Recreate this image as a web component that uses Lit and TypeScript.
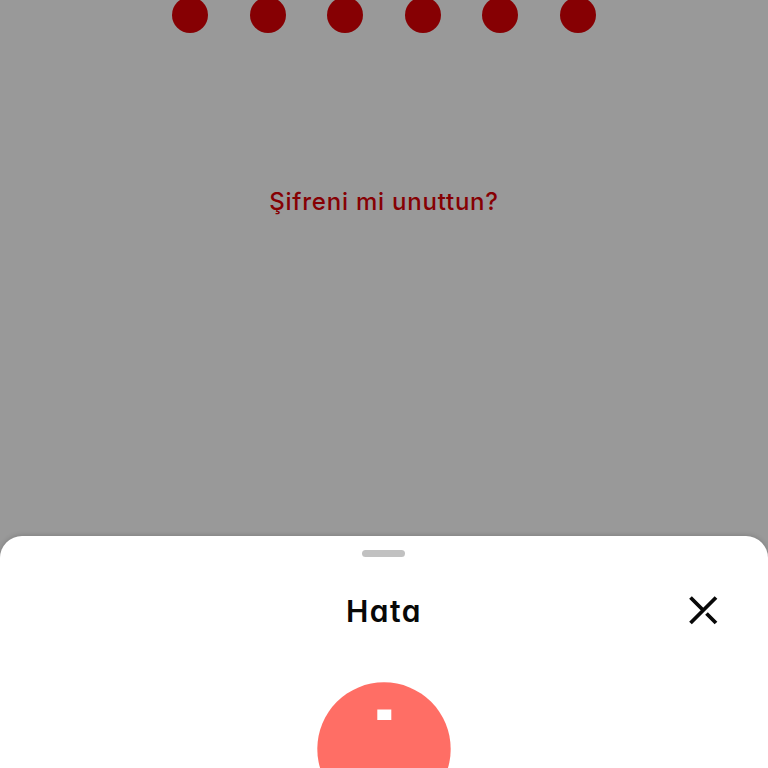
import { LitElement, html, css } from "lit";
import { customElement, property } from "lit/decorators.js";

@customElement("pin-dots")
class PinDots extends LitElement {
  @property({ type: Number }) count = 6;

  static styles = css`
    :host { display: flex; justify-content: center; gap: 41.6px; }
    .dot { width: 36px; height: 36px; border-radius: 50%; background: #860003; }
  `;

  render() {
    return Array.from({ length: this.count }, () => html`<span class="dot"></span>`);
  }
}

@customElement("error-sheet")
class ErrorSheet extends LitElement {
  static styles = css`
    :host {
      display: flex;
      flex-direction: column;
      align-items: center;
      box-sizing: border-box;
      height: 232px;
      padding-top: 14px;
      overflow: hidden;
      background: #fff;
      border-radius: 22px 22px 0 0;
      box-shadow: 0 -1px 5px rgba(0, 0, 0, 0.16);
    }
    .handle { flex: none; width: 43px; height: 7px; margin-right: 1px; border-radius: 4px; background: #c1c1c1; }
    .header {
      flex: none;
      display: grid;
      grid-template-columns: 1fr auto 1fr;
      align-items: center;
      align-self: stretch;
      height: 44px;
      margin-top: 32px;
      padding: 0 50px;
    }
    .title {
      grid-column: 2;
      margin: 0;
      font-size: 30px;
      line-height: 44px;
      font-weight: 600;
      letter-spacing: 1.5px;
      color: #080808;
    }
    .close {
      justify-self: end;
      width: 30px;
      height: 30px;
      margin-top: -3px;
      padding: 0;
      border: 0;
      background: none;
    }
    svg { display: block; }
    .alert { flex: none; margin: 49px 1px 0 0; }
  `;

  render() {
    return html`
      <div class="handle"></div>
      <div class="header">
        <h1 class="title">Hata</h1>
        <button class="close" aria-label="Kapat">
          <svg width="30" height="30" viewBox="0 0 30 30" fill="none" stroke="#080808" stroke-width="3.8">
            <path d="M28 2.5 2.5 28M2.5 2.5 15.5 15.5M18.5 18.5 28 28" />
          </svg>
        </button>
      </div>
      <svg class="alert" width="134" height="134" viewBox="0 0 134 134">
        <circle cx="67" cy="67" r="66.7" fill="#ff6e65" />
        <rect x="60.3" y="27.5" width="14" height="10.5" fill="#fff" />
      </svg>
    `;
  }
}

@customElement("app-root")
class AppRoot extends LitElement {
  static styles = css`
    :host {
      display: flex;
      flex-direction: column;
      height: 768px;
      overflow: hidden;
      background: #999;
      font-family: Inter, "Noto Sans", sans-serif;
      font-feature-settings: "cv11", "ss03";
    }
    pin-dots { margin-top: -3.5px; }
    .forgot {
      margin-top: 151.5px;
      align-self: center;
      font-size: 24px;
      line-height: 36px;
      font-weight: 500;
      letter-spacing: 0.78px;
      color: #860003;
      white-space: nowrap;
    }
    error-sheet { margin-top: auto; }
  `;

  render() {
    return html`
      <pin-dots count="6"></pin-dots>
      <span class="forgot">Şifreni mi unuttun?</span>
      <error-sheet></error-sheet>
    `;
  }
}
